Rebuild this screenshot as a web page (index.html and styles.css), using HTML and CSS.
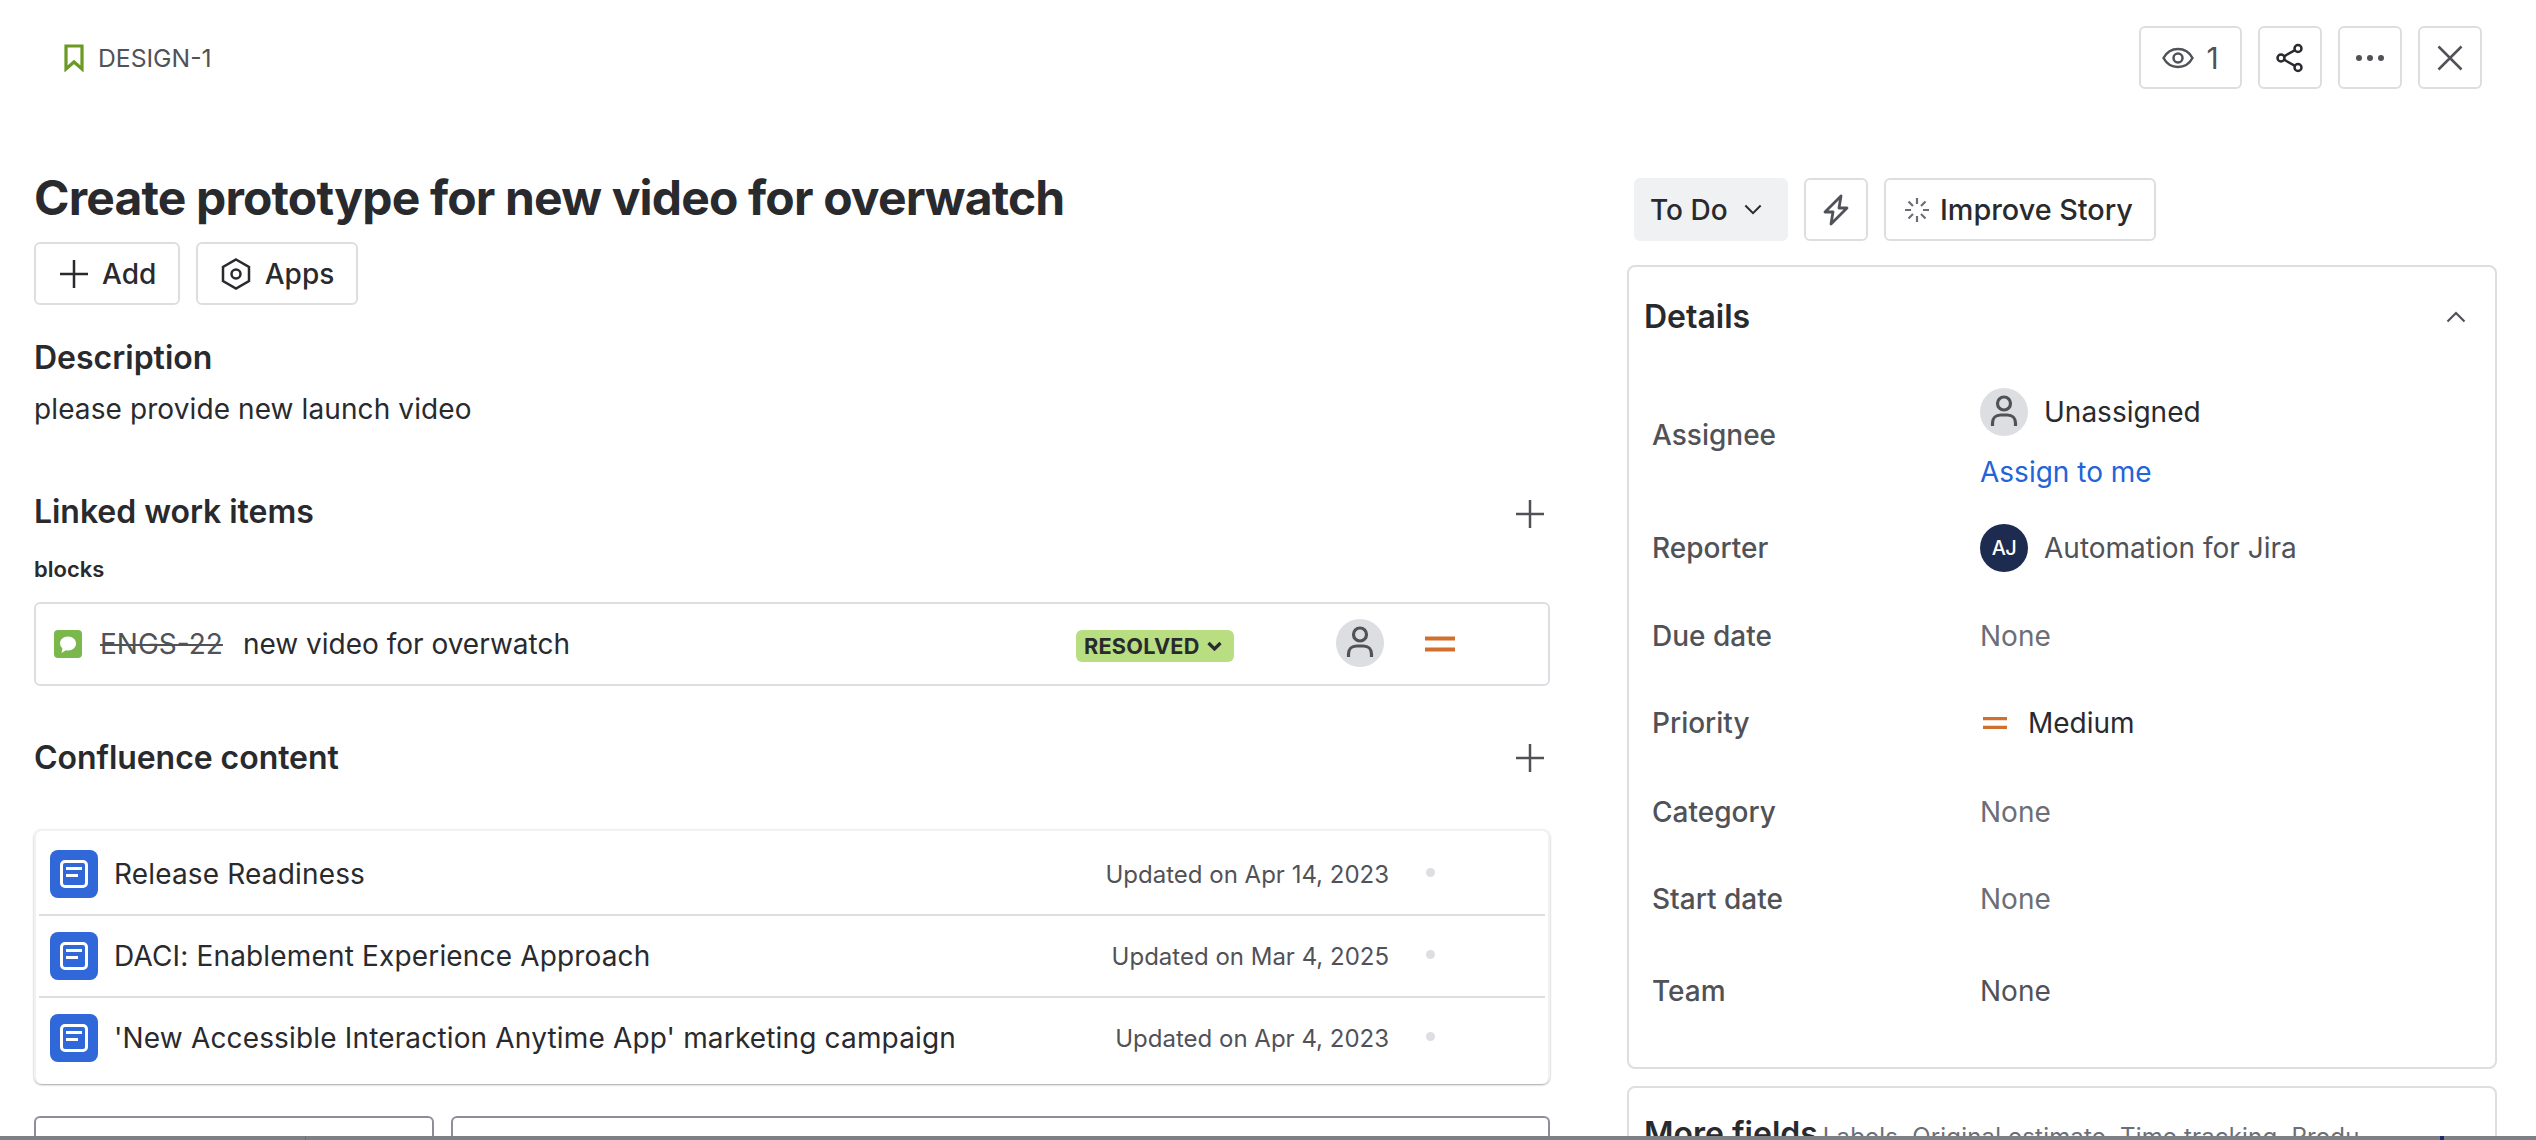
FILE: index.html
```html
<!DOCTYPE html>
<html lang="en">
<head>
<meta charset="utf-8">
<title>DESIGN-1</title>
<link rel="stylesheet" href="styles.css">
</head>
<body>
<div class="page">
  <header class="topbar">
    <div class="crumb">
      <svg class="ic-book" viewBox="0 0 20 28"><path d="M2 2h16v23l-8-7-8 7z" fill="none" stroke="#6a9a23" stroke-width="3.200"/></svg>
      <span>DESIGN-1</span>
    </div>
    <div class="top-actions">
      <button class="btn watch">
        <svg class="ic" viewBox="0 0 32 32"><path d="M1.500 16C5 9.500 10 7 16 7s11 2.500 14.500 9C27 22.500 22 25 16 25S5 22.500 1.500 16z" fill="none" stroke="#505258" stroke-width="2.500"/><circle cx="16" cy="16" r="4.500" fill="none" stroke="#505258" stroke-width="2.500"/></svg>
        <span>1</span>
      </button>
      <button class="btn square">
        <svg class="ic" viewBox="0 0 32 32" fill="none" stroke="#292a2e" stroke-width="2.500"><circle cx="7" cy="16" r="3.500"/><circle cx="24" cy="6.500" r="3.500"/><circle cx="24" cy="25.500" r="3.500"/><path d="M10 14.300 21 8.200M10 17.700l11 6.100"/></svg>
      </button>
      <button class="btn square">
        <svg class="ic" viewBox="0 0 32 32" fill="#505258"><circle cx="5" cy="16" r="3"/><circle cx="16" cy="16" r="3"/><circle cx="27" cy="16" r="3"/></svg>
      </button>
      <button class="btn square">
        <svg class="ic" viewBox="0 0 32 32" fill="none" stroke="#505258" stroke-width="2.500"><path d="M4.500 4.500l23 23M27.500 4.500l-23 23"/></svg>
      </button>
    </div>
  </header>

  <main class="columns">
    <section class="left">
      <h1 class="title">Create prototype for new video for overwatch</h1>
      <div class="actions">
        <button class="btn add">
          <svg class="ic-plus dark" viewBox="0 0 28 28"><path d="M14 0v28M0 14h28"/></svg>
          <span>Add</span>
        </button>
        <button class="btn apps">
          <svg class="ic" viewBox="0 0 32 32" fill="none" stroke="#292a2e" stroke-width="2.500"><path d="M16 1.500 29 9v14L16 30.500 3 23V9z"/><circle cx="16" cy="16" r="4.500"/></svg>
          <span>Apps</span>
        </button>
      </div>

      <h2 class="h-desc">Description</h2>
      <p class="desc">please provide new launch video</p>

      <div class="sec-head linked-head">
        <h2 class="h-sec">Linked work items</h2>
        <svg class="ic-plus" viewBox="0 0 28 28"><path d="M14 0v28M0 14h28"/></svg>
      </div>
      <div class="blocks">blocks</div>
      <div class="linked-row">
        <svg class="ic-work" viewBox="0 0 28 28"><rect width="28" height="28" rx="4" fill="#7ab84b"/><path d="M14 6.500c4.600 0 8 2.900 8 7 0 4-3.400 7-8 7-.8 0-1.500-.1-2.200-.3L7.500 23l1-4.800C6.900 16.900 6 15.300 6 13.500c0-4.100 3.400-7 8-7z" fill="#fff"/></svg>
        <span class="key">ENGS-22</span>
        <span class="linked-name">new video for overwatch</span>
        <span class="pill">RESOLVED<svg class="ic-pill" viewBox="0 0 15 10"><path d="M1.500 2 7.500 8l6-6" fill="none" stroke="#292a2e" stroke-width="3.200"/></svg></span>
        <span class="avatar anon"><svg viewBox="0 0 48 48" fill="none" stroke="#505258" stroke-width="3.200"><circle cx="24" cy="15.500" r="6.500"/><path d="M12.500 38v-3c0-5 3.500-8 8-8h7c4.500 0 8 3 8 8v3"/></svg></span>
        <svg class="ic-prio" viewBox="0 0 30 16"><path d="M0 2.500h30M0 13.500h30" stroke="#d0702c" stroke-width="4"/></svg>
      </div>

      <div class="sec-head conf-head">
        <h2 class="h-sec">Confluence content</h2>
        <svg class="ic-plus" viewBox="0 0 28 28"><path d="M14 0v28M0 14h28"/></svg>
      </div>
      <div class="conf-card">
        <div class="conf-row">
          <svg class="ic-doc" viewBox="0 0 48 48"><rect width="48" height="48" rx="8" fill="#3067d9"/><rect x="11.500" y="11.500" width="25" height="25" rx="3.500" fill="none" stroke="#fff" stroke-width="3"/><path d="M16 18.500h16M16 25.500h12" stroke="#fff" stroke-width="3"/></svg>
          <span class="conf-name">Release Readiness</span>
          <span class="conf-date">Updated on Apr 14, 2023</span>
          <span class="dot"></span>
        </div>
        <div class="conf-row">
          <svg class="ic-doc" viewBox="0 0 48 48"><rect width="48" height="48" rx="8" fill="#3067d9"/><rect x="11.500" y="11.500" width="25" height="25" rx="3.500" fill="none" stroke="#fff" stroke-width="3"/><path d="M16 18.500h16M16 25.500h12" stroke="#fff" stroke-width="3"/></svg>
          <span class="conf-name">DACI: Enablement Experience Approach</span>
          <span class="conf-date">Updated on Mar 4, 2025</span>
          <span class="dot"></span>
        </div>
        <div class="conf-row">
          <svg class="ic-doc" viewBox="0 0 48 48"><rect width="48" height="48" rx="8" fill="#3067d9"/><rect x="11.500" y="11.500" width="25" height="25" rx="3.500" fill="none" stroke="#fff" stroke-width="3"/><path d="M16 18.500h16M16 25.500h12" stroke="#fff" stroke-width="3"/></svg>
          <span class="conf-name">'New Accessible Interaction Anytime App' marketing campaign</span>
          <span class="conf-date">Updated on Apr 4, 2023</span>
          <span class="dot"></span>
        </div>
      </div>
      <div class="cut-buttons">
        <div class="cut a"></div>
        <div class="cut b"></div>
      </div>
    </section>

    <aside class="right">
      <div class="status-row">
        <button class="btn todo">
          <span>To Do</span>
          <svg class="ic-chev" viewBox="0 0 20 12"><path d="M1.500 1.500 10 10l8.500-8.500" fill="none" stroke="#292a2e" stroke-width="2.200"/></svg>
        </button>
        <button class="btn square">
          <svg class="ic" viewBox="0 0 32 32" fill="none" stroke="#505258" stroke-width="2.800" stroke-linejoin="round"><path d="M21 2 5 18h8l-2 12 16-16h-8z"/></svg>
        </button>
        <button class="btn improve">
          <svg class="ic-spark" viewBox="0 0 24 24" stroke="#6b6e76" stroke-width="2.200"><path d="M12 0v6M12 18v6M0 12h6M18 12h6M3.500 3.500l4.500 4.500M16 16l4.500 4.500M20.500 3.500 16 8M8 16l-4.500 4.500"/></svg>
          <span>Improve Story</span>
        </button>
      </div>

      <div class="card details">
        <div class="card-head">
          <h2 class="h-card">Details</h2>
          <svg class="ic-chev small" viewBox="0 0 20 12"><path d="M1.500 10.500 10 2l8.500 8.500" fill="none" stroke="#505258" stroke-width="2.200"/></svg>
        </div>
        <div class="field f-assignee">
          <div class="label">Assignee</div>
          <div class="value stack">
            <div class="person">
              <span class="avatar anon"><svg viewBox="0 0 48 48" fill="none" stroke="#505258" stroke-width="3.200"><circle cx="24" cy="15.500" r="6.500"/><path d="M12.500 38v-3c0-5 3.500-8 8-8h7c4.500 0 8 3 8 8v3"/></svg></span>
              <span class="strong">Unassigned</span>
            </div>
            <a class="assign">Assign to me</a>
          </div>
        </div>
        <div class="field f-reporter">
          <div class="label">Reporter</div>
          <div class="value person">
            <span class="avatar aj">AJ</span>
            <span class="muted">Automation for Jira</span>
          </div>
        </div>
        <div class="field f-due">
          <div class="label">Due date</div>
          <div class="value none">None</div>
        </div>
        <div class="field f-prio">
          <div class="label">Priority</div>
          <div class="value prio">
            <svg class="ic-prio small" viewBox="0 0 30 16"><path d="M0 2.500h30M0 13.500h30" stroke="#d0702c" stroke-width="4"/></svg>
            <span class="strong">Medium</span>
          </div>
        </div>
        <div class="field f-cat">
          <div class="label">Category</div>
          <div class="value none">None</div>
        </div>
        <div class="field f-start">
          <div class="label">Start date</div>
          <div class="value none">None</div>
        </div>
        <div class="field f-team">
          <div class="label">Team</div>
          <div class="value none dark">None</div>
        </div>
      </div>

      <div class="card more">
        <h2 class="h-card">More fields</h2>
        <span class="more-sub">Labels, Original estimate, Time tracking, Produ</span>
        <svg class="ic-chev small" viewBox="0 0 20 12"><path d="M1.500 1.500 10 10l8.500-8.500" fill="none" stroke="#505258" stroke-width="2.200"/></svg>
      </div>
    </aside>
  </main>
  <div class="edge"><span class="edge-seam"></span><span class="edge-mark"></span></div>
</div>
</body>
</html>
```
FILE: styles.css
```css
* { box-sizing: border-box; }
html, body { margin: 0; padding: 0; background: #fff; }
body { font-family: Inter, "Noto Sans", sans-serif; color: #292a2e; }
h1, h2, p { margin: 0; }
button { font: inherit; color: inherit; background: #fff; cursor: pointer; }

.page { position: relative; width: 2536px; height: 1140px; overflow: hidden; }

.topbar { display: flex; justify-content: space-between; align-items: flex-start; height: 178px; padding: 26px 54px 0 64px; }
.crumb { display: flex; align-items: center; gap: 14px; height: 63px; font-size: 24.700px; color: #505258; }
.ic-book { width: 20px; height: 28px; }
.top-actions { display: flex; gap: 16px; }

.btn { display: inline-flex; align-items: center; justify-content: center; height: 63px; padding: 0; border: 2px solid #dddee1; border-radius: 6px; font-size: 28px; font-weight: 500; }
.square { width: 64px; }
.ic { width: 32px; height: 32px; }
.watch { width: 103px; gap: 12px; color: #505258; font-weight: 400; font-size: 30px; }

.columns { display: flex; padding-left: 34px; }
.left { width: 1516px; margin-top: -8px; flex: none; }
.right { width: 870px; flex: none; margin-left: 77px; }

.title { font-size: 48px; font-weight: 650; line-height: 56px; letter-spacing: -0.84px; }
.actions { display: flex; gap: 16px; margin-top: 16px; }
.add { width: 146px; gap: 14px; justify-content: flex-start; padding-left: 24px; }
.apps { width: 162px; gap: 13px; }
.ic-plus { width: 28px; height: 28px; fill: none; stroke: #505258; stroke-width: 2.500; flex: none; }
.ic-plus.dark { stroke: #292a2e; }

.h-desc { font-size: 32px; font-weight: 600; line-height: 40px; margin-top: 33px; }
.desc { font-size: 28px; line-height: 40px; margin-top: 11px; letter-spacing: 0.1px; }

.sec-head { display: flex; justify-content: space-between; align-items: center; padding-right: 6px; }
.h-sec { font-size: 32px; font-weight: 620; line-height: 40px; letter-spacing: -0.05px; }
.linked-head { margin-top: 63px; }
.linked-head .ic-plus { margin-top: 4px; }
.blocks { font-size: 22px; font-weight: 600; line-height: 28px; margin-top: 23px; }

.linked-row { display: flex; align-items: center; height: 84px; margin-top: 19px; padding-left: 18px; border: 2px solid #dddee1; border-radius: 6px; position: relative; }
.ic-work { width: 28px; height: 28px; flex: none; }
.key { margin-left: 18px; font-size: 28px; color: #505258; text-decoration: line-through; }
.linked-name { margin-left: 20px; font-size: 28px; }
.pill { display: inline-flex; align-items: center; gap: 7px; width: 158px; height: 32px; margin-left: 506px; padding-left: 8px; margin-top: 4px; background: #b9de82; border-radius: 6px; font-size: 21.700px; font-weight: 700; letter-spacing: 0.2px; flex: none; }
.ic-pill { width: 15px; height: 10px; flex: none; }
.avatar { display: inline-flex; align-items: center; justify-content: center; width: 48px; height: 48px; border-radius: 50%; flex: none; }
.avatar svg { width: 48px; height: 48px; }
.anon { background: #dddee1; }
.linked-row .anon { margin-left: 102px; margin-top: -2px; }
.ic-prio { width: 30px; height: 16px; flex: none; margin-left: 41px; }

.conf-head { margin-top: 52px; }
.conf-card { margin-top: 51px; height: 255px; border: 2px solid #f0f1f2; border-bottom: 0; border-radius: 8px; box-shadow: 0 1px 2px rgba(30, 31, 33, .4); padding: 0 3px; }
.conf-row { display: flex; align-items: center; height: 82px; padding: 0 0 0 11px; border-bottom: 2px solid #dddee1; }
.conf-row:first-child { height: 85px; padding-top: 3px; }
.conf-row:last-child { height: 80px; border-bottom: 0; }
.ic-doc { width: 48px; height: 48px; flex: none; }
.conf-name { margin-left: 16px; font-size: 28px; flex: 1; letter-spacing: 0.16px; }
.conf-date { font-size: 24px; color: #505258; }
.dot { width: 9px; height: 9px; margin: -4px 110px 0 37px; border-radius: 50%; background: #dddee1; }

.cut-buttons { display: flex; gap: 17px; margin-top: 32px; }
.cut { height: 40px; border: 2px solid #8c8f97; border-radius: 6px; }
.cut.a { width: 400px; }
.cut.b { width: 1099px; }

.status-row { display: flex; gap: 16px; margin-left: 7px; }
.todo { width: 154px; gap: 16px; justify-content: flex-start; padding-left: 14px; background: #f0f1f2; border-color: #f0f1f2; }
.ic-chev { width: 20px; height: 12px; flex: none; }
.todo .ic-chev { width: 18px; height: 11px; }
.improve { width: 272px; gap: 11px; justify-content: flex-start; padding-left: 19px; font-size: 28.800px; }
.ic-spark { width: 24px; height: 24px; flex: none; }

.card { border: 2px solid #dddee1; border-radius: 8px; }
.details { margin-top: 24px; height: 804px; }
.card-head { display: flex; justify-content: space-between; align-items: center; padding: 30px 29px 0 15px; height: 70px; }
.h-card { font-size: 32px; font-weight: 570; line-height: 40px; }
.field { display: flex; align-items: center; padding-left: 23px; font-size: 28px; }
.label { width: 328px; flex: none; color: #505258; font-weight: 500; }
.value { flex: 1; }
.person { display: flex; align-items: center; gap: 16px; }
.stack { display: flex; flex-direction: column; align-items: flex-start; gap: 16px; }
.assign { color: #2563d9; line-height: 40px; }
.strong { color: #292a2e; }
.muted { color: #505258; }
.aj { background: #1c2b4f; color: #fff; font-size: 20px; font-weight: 500; letter-spacing: -0.5px; }
.none { color: #6b6e76; }
.none.dark { color: #505258; }
.prio { display: flex; align-items: center; gap: 21px; }
.ic-prio.small { width: 24px; height: 14px; margin-left: 3px; }
.f-assignee { height: 104px; margin-top: 51px; }
.f-assignee .label { margin-top: -10px; }
.f-reporter { height: 48px; margin-top: 32px; }
.f-due { height: 40px; margin-top: 44px; }
.f-prio { height: 40px; margin-top: 47px; }
.f-cat { height: 40px; margin-top: 49px; }
.f-start { height: 40px; margin-top: 47px; }
.f-team { height: 40px; margin-top: 52px; }

.more { display: flex; align-items: baseline; gap: 5px; margin-top: 17px; height: 80px; padding: 26px 29px 0 15px; position: relative; }
.more .h-card { font-weight: 600; }
.more-sub { font-size: 24px; color: #6b6e76; flex: 1; letter-spacing: 0.18px; }
.more .ic-chev { align-self: center; margin-top: 6px; }

.edge { position: absolute; left: 0; right: 0; bottom: 0; height: 4px; background: #7f8085; }
.edge-seam { position: absolute; left: 305px; top: 0; width: 1px; height: 4px; background: #6b6e76; }
.edge-mark { position: absolute; left: 2440px; top: 0; width: 4px; height: 4px; background: #1c2b6f; }
```
